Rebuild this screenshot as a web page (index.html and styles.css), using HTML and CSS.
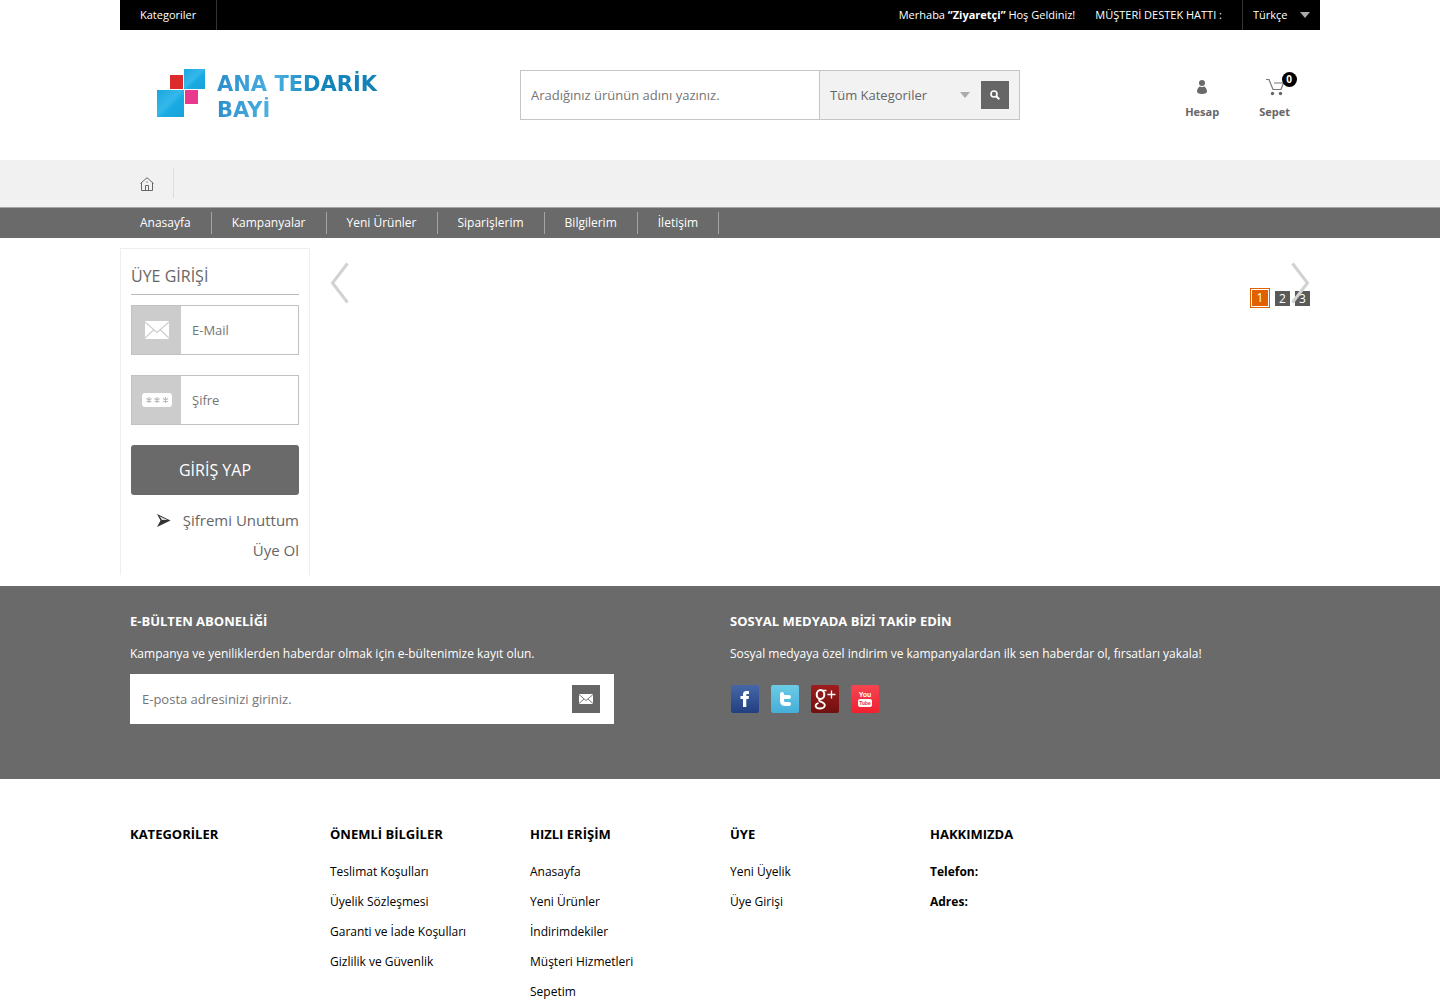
FILE: index.html
```html
<!DOCTYPE html>
<html lang="tr">
<head>
<meta charset="utf-8">
<meta name="viewport" content="width=device-width, initial-scale=1">
<title>Ana Tedarik Bayi</title>
<link rel="stylesheet" href="styles.css">
</head>
<body>
<div class="container topbar">
  <a class="topbar-cats" href="#">Kategoriler</a>
  <div class="topbar-right">
    <span>Merhaba <b>“Ziyaretçi”</b> Hoş Geldiniz!</span>
    <span>MÜŞTERİ DESTEK HATTI :</span>
    <div class="lang select-wrap">
      <select aria-label="Dil"><option>Türkçe</option></select>
      <svg class="caret" width="10" height="6" viewBox="0 0 10 6" aria-hidden="true"><path d="M0 0h10L5 6z" fill="currentColor"/></svg>
    </div>
  </div>
</div>

<header class="container header">
  <a class="logo" href="#">
    <svg width="48" height="48" viewBox="0 0 48 48" aria-hidden="true">
      <defs>
        <linearGradient id="cyan" x1="0" y1="0" x2="1" y2="1"><stop offset="0" stop-color="#1ba6df"/><stop offset=".45" stop-color="#35b8ea"/><stop offset=".6" stop-color="#18abe3"/><stop offset="1" stop-color="#1aa0d6"/></linearGradient>
      </defs>
      <path d="M27 0h21v20H27z" fill="url(#cyan)"/>
      <path d="M13 6h13v14H13z" fill="#dc2b2b"/>
      <path d="M0 21h27v27H0z" fill="url(#cyan)"/>
      <path d="M28 21h13v14H28z" fill="#e9398f"/>
    </svg>
    <span class="logo-text">ANA TEDARİK<br>BAYİ</span>
  </a>

  <form class="search">
    <input class="search-text" type="text" placeholder="Aradığınız ürünün adını yazınız." aria-label="Arama">
    <div class="search-side">
      <div class="search-cat select-wrap">
        <select aria-label="Kategori"><option>Tüm Kategoriler</option></select>
        <svg class="caret" width="10" height="6" viewBox="0 0 10 6" aria-hidden="true"><path d="M0 0h10L5 6z" fill="currentColor"/></svg>
      </div>
      <button class="square-btn" type="button" aria-label="Ara">
        <svg width="10" height="10" viewBox="0 0 10 10" aria-hidden="true"><circle cx="4" cy="4" r="3" fill="none" stroke="#fff" stroke-width="1.6"/><path d="M6.2 6.2 9.3 9.3" stroke="#fff" stroke-width="2"/></svg>
      </button>
    </div>
  </form>

  <div class="account">
    <a href="#">
      <svg width="20" height="20" viewBox="0 0 20 20" aria-hidden="true"><circle cx="10" cy="6" r="3" fill="#6a6a6a"/><path d="M5 14.500c0-3 2-5 3.200-5 1 .7 2.600.7 3.600 0 1.200 0 3.200 2 3.200 5 0 1.600-1.600 2.500-5 2.500s-5-.9-5-2.500z" fill="#6a6a6a"/></svg>
      Hesap
    </a>
    <a href="#">
      <span class="cart">
        <svg width="20" height="20" viewBox="0 0 20 20" aria-hidden="true"><path d="M1 2.500h3l4 10h8l2.500-6.500H9" fill="none" stroke="#777" stroke-width="1.200"/><circle cx="7.500" cy="16.500" r="1.700" fill="#666"/><circle cx="15.500" cy="16.500" r="1.700" fill="#666"/></svg>
        <span class="badge">0</span>
      </span>
      Sepet
    </a>
  </div>
</header>

<nav class="home-bar">
  <div class="container">
    <a class="home-link" href="#" aria-label="Ana sayfa">
      <svg width="14" height="14" viewBox="0 0 14 14" aria-hidden="true"><path d="M.5 6.500 7 .7l6.500 5.800M1.500 6v7.500h11V6M5.500 13.500V8.500h3v5M6.300 5h1.400" fill="none" stroke="#666"/></svg>
    </a>
  </div>
</nav>
<nav class="menu-bar">
  <ul class="container menu">
    <li><a href="#">Anasayfa</a></li>
    <li><a href="#">Kampanyalar</a></li>
    <li><a href="#">Yeni Ürünler</a></li>
    <li><a href="#">Siparişlerim</a></li>
    <li><a href="#">Bilgilerim</a></li>
    <li><a href="#">İletişim</a></li>
  </ul>
</nav>

<main class="container main">
  <form class="login">
    <h2>ÜYE GİRİŞİ</h2>
    <div class="field">
      <label for="email"><svg width="24" height="18" viewBox="0 0 24 18" aria-label="E-Mail"><rect width="24" height="18" fill="#fff"/><path d="M0 1l12 10.500L24 1M0 17l8.500-8M24 17l-8.500-8" fill="none" stroke="#ccc" stroke-width="1.200"/></svg></label>
      <input id="email" type="email" placeholder="E-Mail">
    </div>
    <div class="field">
      <label for="password"><svg width="30" height="14" viewBox="0 0 30 14" aria-label="Şifre"><rect width="30" height="14" rx="3" fill="#fff"/><path d="M7 4v6M4.400 5.500l5.200 3M4.400 8.500l5.200-3M15 4v6M12.400 5.500l5.200 3M12.400 8.500l5.200-3M23.500 4v6M20.900 5.500l5.200 3M20.900 8.500l5.200-3" stroke="#bbb" stroke-width="1.200"/></svg></label>
      <input id="password" type="password" placeholder="Şifre">
    </div>
    <button class="login-btn" type="button">GİRİŞ YAP</button>
    <a class="login-link" href="#">
      <svg width="14" height="14" viewBox="0 0 14 14" aria-hidden="true"><path d="M0 1l13.500 6.500L0 14l3.500-6.500z" fill="#333"/><path d="M2.500 3.200 10.500 7H5z" fill="#ddd"/></svg>
      Şifremi Unuttum
    </a>
    <a class="login-link" href="#">Üye Ol</a>
  </form>

  <section class="slider" aria-label="Kampanyalar">
    <button class="arrow" type="button" aria-label="Önceki"><svg width="20" height="42" viewBox="0 0 20 42" aria-hidden="true"><path d="M17.500 1.500 2.500 21l15 19.500" fill="none" stroke="#d2d2d2" stroke-width="3"/></svg></button>
    <button class="arrow arrow-next" type="button" aria-label="Sonraki"><svg width="20" height="42" viewBox="0 0 20 42" aria-hidden="true"><path d="M2.500 1.500 17.500 21l-15 19.500" fill="none" stroke="#d2d2d2" stroke-width="3"/></svg></button>
    <div class="pager">
      <a class="current" href="#">1</a>
      <a href="#">2</a>
      <a href="#">3</a>
    </div>
  </section>
</main>

<section class="band">
  <div class="container band-cols">
    <div>
      <h3>E-BÜLTEN ABONELİĞİ</h3>
      <p>Kampanya ve yeniliklerden haberdar olmak için e-bültenimize kayıt olun.</p>
      <form class="newsletter">
        <input type="email" placeholder="E-posta adresinizi giriniz." aria-label="E-posta">
        <button class="square-btn" type="button" aria-label="Gönder">
          <svg width="14" height="10" viewBox="0 0 14 10" aria-hidden="true"><rect width="14" height="10" fill="#fff"/><path d="M0 .5 7 6.500l7-6M0 9.500l5-4.500M14 9.500 9 5" fill="none" stroke="#666" stroke-width=".9"/></svg>
        </button>
      </form>
    </div>
    <div>
      <h3>SOSYAL MEDYADA BİZİ TAKİP EDİN</h3>
      <p>Sosyal medyaya özel indirim ve kampanyalardan ilk sen haberdar ol, fırsatları yakala!</p>
      <div class="social">
        <a class="fb" href="#" aria-label="Facebook"><svg width="28" height="28" viewBox="0 0 28 28"><path d="M12 22v-8h-2.500v-3H12V9.500C12 7 13.300 6 15.500 6H18v3h-1.500c-1 0-1.200.4-1.200 1.200V11H18l-.4 3h-2.300v8z" fill="#fff"/></svg></a>
        <a class="tw" href="#" aria-label="Twitter"><svg width="28" height="28" viewBox="0 0 28 28"><path d="M11 9v6.500c0 2 1.200 3.500 3.500 3.500H18M11 12h7" fill="none" stroke="#fff" stroke-width="4" stroke-linecap="round" stroke-linejoin="round"/></svg></a>
        <a class="gp" href="#" aria-label="Google Plus"><svg width="28" height="28" viewBox="0 0 28 28"><g fill="none" stroke="#fff"><ellipse cx="9.500" cy="9.500" rx="3.800" ry="4.500" stroke-width="2"/><path d="M11 5.500h4.500" stroke-width="1.500"/><path d="M9 14c-2.500 2 .5 2.500 2.500 3.500 4 2 2.500 6-2.500 6s-6-4-1.500-5.500" stroke-width="1.800"/><path d="M20.500 5.500v8M16.500 9.500h8" stroke-width="1.300"/></g></svg></a>
        <a class="yt" href="#" aria-label="YouTube"><span class="you">You</span><span class="tube">Tube</span></a>
      </div>
    </div>
  </div>
</section>

<footer class="container footer">
  <div><h3>KATEGORİLER</h3></div>
  <div>
    <h3>ÖNEMLİ BİLGİLER</h3>
    <ul>
      <li><a href="#">Teslimat Koşulları</a></li>
      <li><a href="#">Üyelik Sözleşmesi</a></li>
      <li><a href="#">Garanti ve İade Koşulları</a></li>
      <li><a href="#">Gizlilik ve Güvenlik</a></li>
    </ul>
  </div>
  <div>
    <h3>HIZLI ERİŞİM</h3>
    <ul>
      <li><a href="#">Anasayfa</a></li>
      <li><a href="#">Yeni Ürünler</a></li>
      <li><a href="#">İndirimdekiler</a></li>
      <li><a href="#">Müşteri Hizmetleri</a></li>
      <li><a href="#">Sepetim</a></li>
    </ul>
  </div>
  <div>
    <h3>ÜYE</h3>
    <ul>
      <li><a href="#">Yeni Üyelik</a></li>
      <li><a href="#">Üye Girişi</a></li>
    </ul>
  </div>
  <div>
    <h3>HAKKIMIZDA</h3>
    <ul>
      <li><b>Telefon:</b></li>
      <li><b>Adres:</b></li>
    </ul>
  </div>
</footer>
</body>
</html>
```
FILE: styles.css
```css
* { box-sizing: border-box; }
body {
  margin: 0;
  background: #fff;
  color: #000;
  font: 12px/30px "Open Sans", sans-serif;
}
a { color: inherit; text-decoration: none; }
svg { display: block; flex: none; }
ul { list-style: none; margin: 0; padding: 0; }
h2, h3, p { margin: 0; }
input, select, button { font: inherit; color: inherit; border: 0; padding: 0; border-radius: 0; background: none; }
input { min-width: 0; }
input::placeholder { color: #757575; opacity: 1; }
.container { width: 100%; max-width: 1200px; margin: 0 auto; }

.select-wrap { display: grid; align-items: center; }
.select-wrap select { grid-area: 1 / 1; appearance: none; width: 100%; height: 100%; }
.caret { grid-area: 1 / 1; justify-self: end; pointer-events: none; }

.square-btn {
  display: flex; align-items: center; justify-content: center;
  width: 28px; height: 28px; background: #666; flex: none;
}

/* Top bar */
.topbar { display: flex; justify-content: space-between; height: 30px; background: #000; color: #fff; font-size: 11px; }
.topbar-cats { padding: 0 20px; border-right: 1px solid #333; }
.topbar-right { display: flex; gap: 20px; }
.lang { width: 78px; padding: 0 10px; border-left: 1px solid #333; color: #fff; }
.lang option { color: #000; }
.lang .caret { color: #aaa; }

/* Header */
.header { display: flex; align-items: center; height: 130px; }
.logo { display: flex; gap: 12px; align-items: flex-start; width: 400px; height: 52px; padding-left: 37px; }
.logo-text {
  padding-top: 2px;
  font: bold 21px/26px "DejaVu Sans", sans-serif;
  background: linear-gradient(100deg, #2a8cc9, #4cb0e2 35%, #1286bd 60%, #1580b5);
  background-clip: text;
  color: transparent;
}
.search { display: flex; width: 500px; height: 50px; border: 1px solid #c5c5c5; font-size: 13px; color: #666; }
.search-text { flex: 1; padding: 0 10px; }
.search-side { display: flex; align-items: center; gap: 11px; width: 200px; padding: 0 10px; border-left: 1px solid #c5c5c5; background: #f2f2f2; }
.search-cat { flex: 1; height: 100%; }
.search-cat .caret { color: #aaa; }
.account { display: flex; gap: 40px; margin-left: auto; padding-right: 30px; font: bold 11px/30px "Open Sans", sans-serif; color: #666; }
.account a { display: flex; flex-direction: column; align-items: center; padding-top: 14px; }
.cart { position: relative; }
.badge {
  position: absolute; left: 17px; top: -5px;
  width: 15px; height: 15px; border-radius: 50%;
  background: #000; color: #fff; font-size: 10px; line-height: 15px; text-align: center;
}

/* Navigation */
.home-bar { height: 47px; padding-top: 8px; background: #f1f1f1; }
.home-link { display: flex; align-items: center; width: 54px; height: 30px; padding: 2px 0 0 20px; border-right: 1px solid #ddd; }
.menu-bar { border-top: 1px solid #a5a5a5; background: #6a6a6a; color: #fff; }
.menu { display: flex; align-items: center; height: 30px; }
.menu li { line-height: 22px; padding: 0 20px; border-right: 1px solid #a5a5a5; }

/* Login and slider */
.main { display: flex; align-items: flex-start; padding: 10px 0 11px; }
.login { width: 190px; padding: 10px 10px 10px; border: 1px solid #eee; border-bottom: 0; color: #666; }
.login h2 { margin-bottom: 10px; padding: 2px 0 3px; border-bottom: 1px solid #bbb; font-size: 16px; line-height: 30px; font-weight: 400; }
.field { display: flex; height: 50px; margin-bottom: 20px; border: 1px solid #c2c2c2; font-size: 13px; }
.field label { display: flex; align-items: center; justify-content: center; width: 49px; background: #ccc; flex: none; }
.field input { flex: 1; padding: 0 11px; }
.login-btn { display: block; width: 100%; height: 50px; margin-bottom: 10px; border-radius: 3px; background: #6a6a6a; color: #fff; font-size: 16px; }
.login-link { display: flex; align-items: center; justify-content: flex-end; gap: 12px; font-size: 15px; line-height: 30px; }
.slider { position: relative; flex: 1; display: flex; justify-content: space-between; padding: 14px 10px 0 20px; }
.arrow-next { position: relative; z-index: 1; }
.pager { position: absolute; right: 10px; top: 40px; display: flex; align-items: center; gap: 5px; color: #fff; font-size: 12px; line-height: 15px; text-align: center; }
.pager a { width: 15px; height: 15px; background: #5a5a5a; }
.pager .current { width: 20px; height: 20px; line-height: 16px; border: 1px solid #e06000; background: #e06000; box-shadow: inset 0 0 0 1px #fff; padding-top: 1px; }

/* Newsletter and social */
.band { background: #6a6a6a; color: #fff; }
.band-cols { display: grid; grid-template-columns: 1fr 1fr; min-height: 193px; padding: 20px 10px 55px; column-gap: 20px; }
.band h3 { font-size: 13px; line-height: 30px; }
.band p { line-height: 36px; }
.newsletter { display: flex; align-items: center; width: 484px; max-width: 100%; height: 50px; margin-top: 2px; padding: 0 14px 0 12px; background: #fff; color: #666; font-size: 13px; }
.newsletter input { flex: 1; }
.social { display: flex; gap: 12px; padding: 13px 1px 0; }
.social a { width: 28px; height: 28px; border-radius: 2px; }
.fb { background: linear-gradient(#4668a8, #223f80); }
.tw { background: linear-gradient(#6ccbe6, #45aed8); }
.gp { background: linear-gradient(#a01c1c, #701010); }
.yt { display: flex; flex-direction: column; align-items: center; justify-content: center; background: linear-gradient(#f54552, #f02030); font: bold 7px/8px "Liberation Sans", sans-serif; }
.tube { padding: 0 1px; border-radius: 2px; background: #fff; color: #e83040; font-size: 5px; }

/* Footer */
.footer { display: grid; grid-template-columns: repeat(6, 1fr); padding: 40px 0 20px; }
.footer > div { padding-left: 10px; }
.footer h3 { margin-bottom: 8px; font-size: 13px; line-height: 30px; }
```
